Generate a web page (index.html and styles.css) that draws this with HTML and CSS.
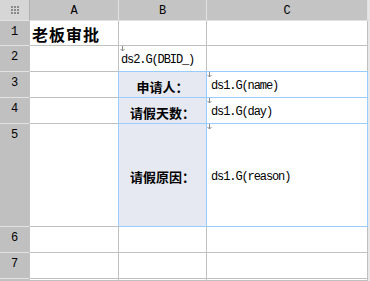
FILE: index.html
```html
<!DOCTYPE html>
<html>
<head>
<meta charset="utf-8">
<link rel="stylesheet" href="styles.css">
</head>
<body>
<div class="sheet">
  <div class="hd corner">
    <svg width="8" height="8" viewBox="0 0 8 8"><g fill="#8a8a8a"><rect x="0" y="0" width="2" height="2"/><rect x="3" y="0" width="2" height="2"/><rect x="6" y="0" width="2" height="2"/><rect x="0" y="3" width="2" height="2"/><rect x="3" y="3" width="2" height="2"/><rect x="6" y="3" width="2" height="2"/><rect x="0" y="6" width="2" height="2"/><rect x="3" y="6" width="2" height="2"/><rect x="6" y="6" width="2" height="2"/></g></svg>
  </div>
  <div class="hd col">A</div>
  <div class="hd col">B</div>
  <div class="hd col">C</div>
  <div class="hd rest"></div>

  <div class="rh">1</div>
  <div class="c title">老板审批</div>
  <div class="c"></div>
  <div class="c"></div>
  <div class="rest"></div>

  <div class="rh">2</div>
  <div class="c"></div>
  <div class="c code sel-top"><span class="mk"><svg width="5" height="6" viewBox="0 0 5 6"><path d="M2.5 0V5M0.5 3L2.5 5L4.5 3" stroke="#8a8a8a" fill="none" stroke-width="1"/></svg></span>ds2.G(DBID_)</div>
  <div class="c sel-top"></div>
  <div class="rest"></div>

  <div class="rh">3</div>
  <div class="c sel-left"></div>
  <div class="c lbl">申请人：</div>
  <div class="c val"><span class="mk"><svg width="5" height="6" viewBox="0 0 5 6"><path d="M2.5 0V5M0.5 3L2.5 5L4.5 3" stroke="#8a8a8a" fill="none" stroke-width="1"/></svg></span>ds1.G(name)</div>
  <div class="rest"></div>

  <div class="rh">4</div>
  <div class="c sel-left"></div>
  <div class="c lbl">请假天数：</div>
  <div class="c val"><span class="mk"><svg width="5" height="6" viewBox="0 0 5 6"><path d="M2.5 0V5M0.5 3L2.5 5L4.5 3" stroke="#8a8a8a" fill="none" stroke-width="1"/></svg></span>ds1.G(day)</div>
  <div class="rest"></div>

  <div class="rh">5</div>
  <div class="c sel-left"></div>
  <div class="c lbl">请假原因：</div>
  <div class="c val"><span class="mk"><svg width="5" height="6" viewBox="0 0 5 6"><path d="M2.5 0V5M0.5 3L2.5 5L4.5 3" stroke="#8a8a8a" fill="none" stroke-width="1"/></svg></span>ds1.G(reason)</div>
  <div class="rest"></div>

  <div class="rh">6</div>
  <div class="c"></div>
  <div class="c"></div>
  <div class="c"></div>
  <div class="rest"></div>

  <div class="rh">7</div>
  <div class="c"></div>
  <div class="c"></div>
  <div class="c"></div>
  <div class="rest"></div>

  <div class="rh"></div>
  <div class="c"></div>
  <div class="c"></div>
  <div class="c"></div>
  <div class="rest"></div>
</div>
</body>
</html>
```
FILE: styles.css
```css
html, body {
  margin: 0;
  padding: 0;
  background: #ffffff;
  overflow: hidden;
}
.sheet {
  display: grid;
  grid-template-columns: 30px 89px 88px 161px 2px;
  grid-template-rows: 21px 25px 26px 26px 26px 103px 26px 26px 2px;
  width: 370px;
  height: 281px;
  overflow: hidden;
  font-family: "Liberation Mono", "DejaVu Sans Mono", monospace;
  font-size: 12px;
  color: #000;
}
.sheet > div {
  box-sizing: border-box;
  position: relative;
}
.hd {
  background: #c4c4c4;
  border-right: 1px solid #e2e2e2;
  border-bottom: 1px solid #e2e2e2;
  display: flex;
  align-items: center;
  justify-content: center;
  line-height: 14px;
}
.corner {
  background: #d6d6d6;
  border-right: 1px solid #b0b0b0;
}
.corner svg { display: block; margin-top: -1px; }
.col {
  padding-top: 1px;
}
.rest {
  background: #e8e8e8;
}
.rh {
  background: #c0c0c0;
  border-right: 1px solid #c0c0c0;
  border-bottom: 1px solid #e2e2e2;
  text-align: center;
  padding-top: 4px;
  line-height: 14px;
}
.c {
  background: #ffffff;
  border-right: 1px solid #c0c0c0;
  border-bottom: 1px solid #c0c0c0;
  display: flex;
  align-items: center;
  white-space: nowrap;
}
.title {
  font-family: "Noto Sans CJK SC", "Liberation Sans", sans-serif;
  font-weight: bold;
  font-size: 16px;
  letter-spacing: 1px;
  padding-left: 2px;
  padding-top: 1px;
}
.code {
  padding-left: 2px;
  padding-top: 3px;
  letter-spacing: -1.1px;
}
.sel-top {
  border-bottom-color: #99ccff;
}
.sel-left {
  border-right-color: #99ccff;
}
.lbl {
  background: #e6e9f2;
  border-right-color: #99ccff;
  border-bottom-color: #99ccff;
  justify-content: center;
  font-family: "Noto Sans CJK SC", "Liberation Sans", sans-serif;
  font-weight: bold;
  font-size: 13px;
  padding-top: 3px;
}
.val {
  border-right-color: #99ccff;
  border-bottom-color: #99ccff;
  padding-left: 4px;
  padding-top: 3px;
  letter-spacing: -1.1px;
}
.mk {
  position: absolute;
  left: 0;
  top: 0;
  width: 5px;
  height: 6px;
}
.mk svg { display: block; }
.code .mk { left: 1px; }
```
